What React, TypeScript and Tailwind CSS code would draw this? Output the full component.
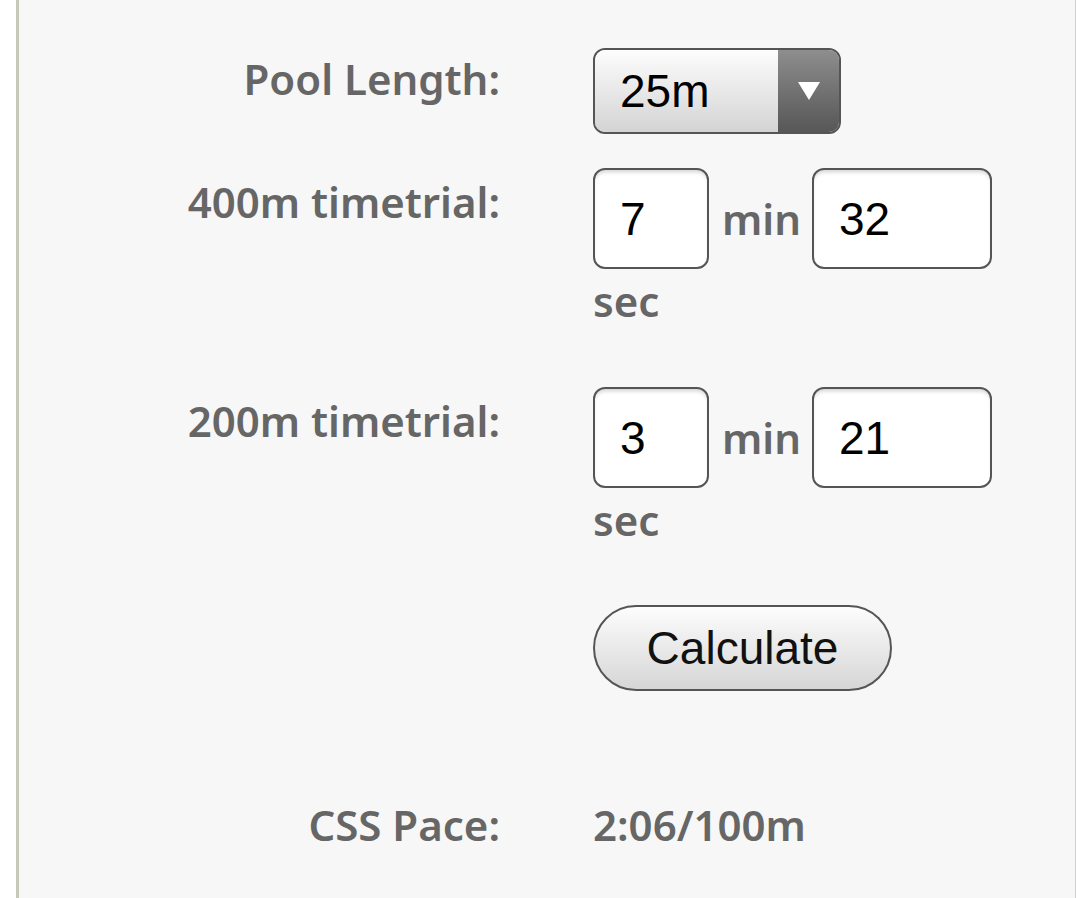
import { useState } from "react";

const label = "text-right font-['Noto_Sans','Open_Sans',sans-serif] font-semibold text-[42px] leading-none text-[#666]";
const unit = "font-['Noto_Sans','Open_Sans',sans-serif] font-semibold text-[42px] leading-none text-[#666]";
const box = "h-[101px] border-2 border-[#555] rounded-[12px] bg-white pl-[25px] text-[46px] text-black outline-none font-['Liberation_Sans',Arial,sans-serif] shadow-[inset_0_4px_4px_-2px_rgba(0,0,0,0.18)]";

interface TimeRowProps {
    title: string;
    min: string;
    sec: string;
}

function TimeRow({ title, min, sec }: TimeRowProps) {
    const [m, setM] = useState(min)
    const [s, setS] = useState(sec)
    return (
        <div className="grid grid-cols-[481px_400px] gap-x-[93px]">
            <div className={`${label} pt-[13px]`}>{title}</div>
            <div className="flex flex-col">
                <div className="flex items-center">
                    <input value={m} onChange={(e) => setM(e.target.value)} className={`${box} w-[116px]`} />
                    <span className={`${unit} ml-[13px] mr-[11px]`}>min</span>
                    <input value={s} onChange={(e) => setS(e.target.value)} className={`${box} w-[180px]`} />
                </div>
                <span className={`${unit} mt-[11px]`}>sec</span>
            </div>
        </div>
    )
}

export default function App() {
    return (
        <div className="min-h-screen bg-white pl-4">
            <div className="min-h-screen bg-[#f7f7f7] border-l-[3px] border-l-[#c8c8b8] border-r border-r-[#cfcfcf] pt-[48px]">
                <div className="grid grid-cols-[481px_400px] gap-x-[93px]">
                    <div className={`${label} pt-[10px]`}>Pool Length:</div>
                    <div>
                        <button type="button" className="flex w-[248px] h-[86px] border-2 border-[#555] rounded-[12px] overflow-hidden">
                            <span className="flex-1 flex items-center pl-[25px] bg-gradient-to-b from-[#fdfdfd] to-[#d4d4d4] text-[46px] text-black font-['Liberation_Sans',Arial,sans-serif]">25m</span>
                            <span className="w-[61px] flex items-center justify-center bg-gradient-to-b from-[#8e8e8e] to-[#575757]">
                                <svg width="22" height="18" viewBox="0 0 22 18">
                                    <path d="M0 0 H22 L11 18 Z" fill="#fff" />
                                </svg>
                            </span>
                        </button>
                    </div>
                </div>

                <div className="mt-[34px]">
                    <TimeRow title="400m timetrial:" min="7" sec="32" />
                </div>
                <div className="mt-[65px]">
                    <TimeRow title="200m timetrial:" min="3" sec="21" />
                </div>

                <div className="grid grid-cols-[481px_400px] gap-x-[93px] mt-[64px]">
                    <div />
                    <div>
                        <button type="button" className="w-[299px] h-[86px] rounded-full border-2 border-[#555] bg-gradient-to-b from-[#fdfdfd] to-[#d6d6d6] text-[46px] text-[#111] font-['Liberation_Sans',Arial,sans-serif]">Calculate</button>
                    </div>
                </div>

                <div className="grid grid-cols-[481px_400px] gap-x-[93px] mt-[113px]">
                    <div className={label}>CSS Pace:</div>
                    <div className={unit}>2:06/100m</div>
                </div>
            </div>
        </div>
    )
}
